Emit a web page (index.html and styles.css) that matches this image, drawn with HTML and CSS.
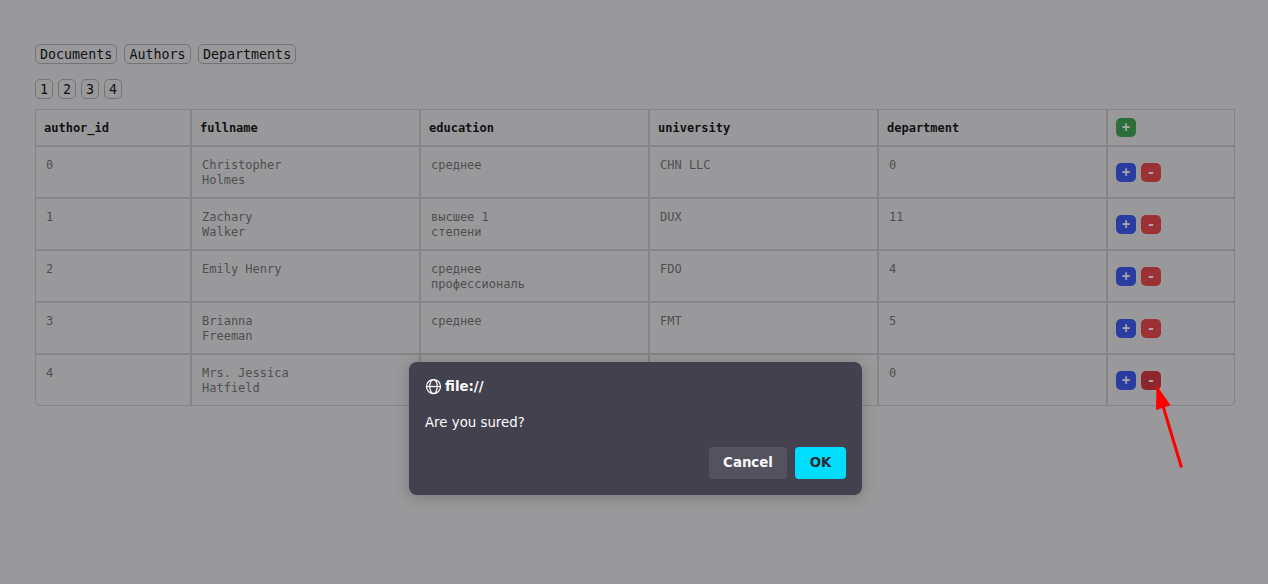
FILE: index.html
```html
<!DOCTYPE html>
<html lang="en">
<head>
<meta charset="utf-8">
<title>Authors</title>
<link rel="stylesheet" href="styles.css">
</head>
<body>
<main class="page">
  <nav class="tabs"><button class="link">Documents</button><button class="link">Authors</button><button class="link">Departments</button></nav>
  <nav class="pages"><button class="link">1</button><button class="link">2</button><button class="link">3</button><button class="link">4</button></nav>
  <section class="table">
    <div class="row head"><div class="cell">author_id</div><div class="cell">fullname</div><div class="cell">education</div><div class="cell">university</div><div class="cell">department</div><div class="cell actions"><button class="btn add">+</button></div></div>
    <div class="row"><div class="cell">0</div><div class="cell">Christopher<br>Holmes</div><div class="cell">среднее</div><div class="cell">CHN LLC</div><div class="cell">0</div><div class="cell actions"><button class="btn edit">+</button><button class="btn remove">-</button></div></div>
    <div class="row"><div class="cell">1</div><div class="cell">Zachary<br>Walker</div><div class="cell">высшее 1<br>степени</div><div class="cell">DUX</div><div class="cell">11</div><div class="cell actions"><button class="btn edit">+</button><button class="btn remove">-</button></div></div>
    <div class="row"><div class="cell">2</div><div class="cell">Emily Henry</div><div class="cell">среднее<br>профессиональ</div><div class="cell">FDO</div><div class="cell">4</div><div class="cell actions"><button class="btn edit">+</button><button class="btn remove">-</button></div></div>
    <div class="row"><div class="cell">3</div><div class="cell">Brianna<br>Freeman</div><div class="cell">среднее</div><div class="cell">FMT</div><div class="cell">5</div><div class="cell actions"><button class="btn edit">+</button><button class="btn remove">-</button></div></div>
    <div class="row"><div class="cell">4</div><div class="cell">Mrs. Jessica<br>Hatfield</div><div class="cell"></div><div class="cell"></div><div class="cell">0</div><div class="cell actions"><button class="btn edit">+</button><button class="btn remove active">-</button></div></div>
  </section>
</main>
<div class="dialog" role="dialog">
  <div class="title">
    <svg class="globe" viewBox="0 0 17 17" fill="none" stroke="currentColor" stroke-width="1.25"><circle cx="8.500" cy="8.500" r="7"/><ellipse cx="8.500" cy="8.500" rx="3.700" ry="7"/><path d="M1.500 8.500h14"/></svg>
    <span class="origin">file://</span>
  </div>
  <p class="message">Are you sured?</p>
  <div class="choices"><button class="choice cancel">Cancel</button><button class="choice ok">OK</button></div>
</div>
<svg class="arrow" viewBox="0 0 30 86"><path d="M7 20L25.500 81.500" stroke="#f00" stroke-width="3" fill="none"/><path d="M0.500 -1L14.500 19.300L0 24Z" fill="#f00"/></svg>
</body>
</html>
```
FILE: styles.css
```css
* { box-sizing: border-box; }
body {
  margin: 0;
  height: 584px;
  overflow: hidden;
  background: #99999b;
  font-family: "DejaVu Sans Mono", monospace;
}
button { margin: 0; padding: 0; border: 0; font: inherit; }
.page { padding: 44px 33px 0 35px; }
.tabs, .pages { display: flex; height: 20px; font-size: 13.333px; }
.tabs { gap: 7.25px; }
.pages { gap: 5px; margin: 15px 0 10px; }
.link {
  height: 20px;
  padding: 1px 4px 0;
  border: 1px solid #747476;
  border-radius: 5px;
  background: transparent;
  color: #111113;
  line-height: 17px;
}
.table { width: 1200px; }
.row {
  display: grid;
  grid-template-columns: 156px repeat(4, 229px) 128px;
  height: 52px;
}
.cell {
  padding: 11px 10px 0;
  border: 1px solid #858587;
  color: #4f4f51;
  font-size: 12px;
  line-height: 15px;
}
.head { height: 37px; }
.head .cell { padding: 11px 8px 0; color: #111113; font-weight: bold; }
.row .actions { display: flex; align-items: center; gap: 5px; padding: 0 8px; }
.row:last-child .cell:first-child { border-bottom-left-radius: 5px; }
.row:last-child .cell:last-child { border-bottom-right-radius: 5px; }
.btn {
  width: 20px;
  height: 19px;
  border-radius: 5px;
  color: #a9a9ab;
  font-size: 13.333px;
  font-weight: bold;
  line-height: 19px;
}
.add { background: #2b6e38; }
.edit { background: #2a3c9f; }
.remove { background: #9c3135; }
.active { background: #8e272c; }
.dialog {
  position: absolute;
  left: 409px;
  top: 362px;
  width: 453px;
  height: 133px;
  padding: 16px;
  border-radius: 8px;
  background: #42414d;
  box-shadow: 0 2px 14px rgba(28, 27, 34, .25);
  color: #fbfbfe;
  font-family: "DejaVu Sans", sans-serif;
  font-size: 13.333px;
}
.title { display: flex; align-items: center; gap: 3px; height: 17px; font-weight: bold; }
.globe { width: 17px; height: 17px; }
.origin { line-height: 17px; }
.message { margin: 19px 0 15px; height: 18px; line-height: 18px; }
.choices { display: flex; justify-content: flex-end; gap: 8px; }
.choice { height: 32px; border-radius: 4px; font-weight: bold; line-height: 30px; }
.cancel { width: 78px; background: #53525e; color: #fbfbfe; }
.ok { width: 51px; background: #00ddff; color: #2b2a33; }
.arrow { position: absolute; left: 1155.500px; top: 386px; width: 30px; height: 86px; overflow: visible; }
```
